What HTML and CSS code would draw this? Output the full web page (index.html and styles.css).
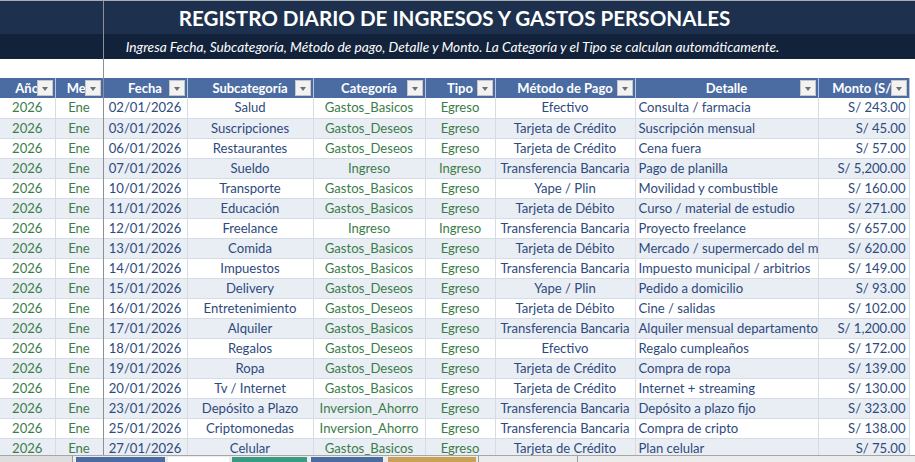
FILE: index.html
```html
<!DOCTYPE html>
<html lang="es">
<head>
<meta charset="utf-8">
<title>Registro diario</title>
<link rel="stylesheet" href="styles.css">
</head>
<body>
<div class="sheet">
  <div class="title-band"><h1>REGISTRO DIARIO DE INGRESOS Y GASTOS PERSONALES</h1></div>
  <div class="sub-band"><p>Ingresa Fecha, Subcategoría, Método de pago, Detalle y Monto. La Categoría y el Tipo se calculan automáticamente.</p></div>
  <div class="spacer"></div>
  <table class="grid">
    <colgroup>
      <col class="c-anio"><col class="c-mes"><col class="c-fecha"><col class="c-sub"><col class="c-cat"><col class="c-tipo"><col class="c-met"><col class="c-det"><col class="c-monto"><col class="c-rest">
    </colgroup>
    <thead>
      <tr>
        <th>Año<span class="dd"></span></th>
        <th>Mes<span class="dd"></span></th>
        <th>Fecha<span class="dd"></span></th>
        <th>Subcategoría<span class="dd"></span></th>
        <th>Categoría<span class="dd"></span></th>
        <th>Tipo<span class="dd"></span></th>
        <th>Método de Pago<span class="dd"></span></th>
        <th>Detalle<span class="dd"></span></th>
        <th>Monto (S/)<span class="dd"></span></th>
        <th class="rest"></th>
      </tr>
    </thead>
    <tbody>
      <tr><td class="g">2026</td><td class="g">Ene</td><td>02/01/2026</td><td>Salud</td><td class="g">Gastos_Basicos</td><td class="g">Egreso</td><td>Efectivo</td><td class="l">Consulta / farmacia</td><td class="r">S/ 243.00</td><td class="rest"></td></tr>
      <tr><td class="g">2026</td><td class="g">Ene</td><td>03/01/2026</td><td>Suscripciones</td><td class="g">Gastos_Deseos</td><td class="g">Egreso</td><td>Tarjeta de Crédito</td><td class="l">Suscripción mensual</td><td class="r">S/ 45.00</td><td class="rest"></td></tr>
      <tr><td class="g">2026</td><td class="g">Ene</td><td>06/01/2026</td><td>Restaurantes</td><td class="g">Gastos_Deseos</td><td class="g">Egreso</td><td>Tarjeta de Crédito</td><td class="l">Cena fuera</td><td class="r">S/ 57.00</td><td class="rest"></td></tr>
      <tr><td class="g">2026</td><td class="g">Ene</td><td>07/01/2026</td><td>Sueldo</td><td class="g">Ingreso</td><td class="g">Ingreso</td><td>Transferencia Bancaria</td><td class="l">Pago de planilla</td><td class="r">S/ 5,200.00</td><td class="rest"></td></tr>
      <tr><td class="g">2026</td><td class="g">Ene</td><td>10/01/2026</td><td>Transporte</td><td class="g">Gastos_Basicos</td><td class="g">Egreso</td><td>Yape / Plin</td><td class="l">Movilidad y combustible</td><td class="r">S/ 160.00</td><td class="rest"></td></tr>
      <tr><td class="g">2026</td><td class="g">Ene</td><td>11/01/2026</td><td>Educación</td><td class="g">Gastos_Basicos</td><td class="g">Egreso</td><td>Tarjeta de Débito</td><td class="l">Curso / material de estudio</td><td class="r">S/ 271.00</td><td class="rest"></td></tr>
      <tr><td class="g">2026</td><td class="g">Ene</td><td>12/01/2026</td><td>Freelance</td><td class="g">Ingreso</td><td class="g">Ingreso</td><td>Transferencia Bancaria</td><td class="l">Proyecto freelance</td><td class="r">S/ 657.00</td><td class="rest"></td></tr>
      <tr><td class="g">2026</td><td class="g">Ene</td><td>13/01/2026</td><td>Comida</td><td class="g">Gastos_Basicos</td><td class="g">Egreso</td><td>Tarjeta de Débito</td><td class="l">Mercado / supermercado del mes</td><td class="r">S/ 620.00</td><td class="rest"></td></tr>
      <tr><td class="g">2026</td><td class="g">Ene</td><td>14/01/2026</td><td>Impuestos</td><td class="g">Gastos_Basicos</td><td class="g">Egreso</td><td>Transferencia Bancaria</td><td class="l">Impuesto municipal / arbitrios</td><td class="r">S/ 149.00</td><td class="rest"></td></tr>
      <tr><td class="g">2026</td><td class="g">Ene</td><td>15/01/2026</td><td>Delivery</td><td class="g">Gastos_Deseos</td><td class="g">Egreso</td><td>Yape / Plin</td><td class="l">Pedido a domicilio</td><td class="r">S/ 93.00</td><td class="rest"></td></tr>
      <tr><td class="g">2026</td><td class="g">Ene</td><td>16/01/2026</td><td>Entretenimiento</td><td class="g">Gastos_Deseos</td><td class="g">Egreso</td><td>Tarjeta de Débito</td><td class="l">Cine / salidas</td><td class="r">S/ 102.00</td><td class="rest"></td></tr>
      <tr><td class="g">2026</td><td class="g">Ene</td><td>17/01/2026</td><td>Alquiler</td><td class="g">Gastos_Basicos</td><td class="g">Egreso</td><td>Transferencia Bancaria</td><td class="l">Alquiler mensual departamento</td><td class="r">S/ 1,200.00</td><td class="rest"></td></tr>
      <tr><td class="g">2026</td><td class="g">Ene</td><td>18/01/2026</td><td>Regalos</td><td class="g">Gastos_Deseos</td><td class="g">Egreso</td><td>Efectivo</td><td class="l">Regalo cumpleaños</td><td class="r">S/ 172.00</td><td class="rest"></td></tr>
      <tr><td class="g">2026</td><td class="g">Ene</td><td>19/01/2026</td><td>Ropa</td><td class="g">Gastos_Deseos</td><td class="g">Egreso</td><td>Tarjeta de Crédito</td><td class="l">Compra de ropa</td><td class="r">S/ 139.00</td><td class="rest"></td></tr>
      <tr><td class="g">2026</td><td class="g">Ene</td><td>20/01/2026</td><td>Tv / Internet</td><td class="g">Gastos_Basicos</td><td class="g">Egreso</td><td>Tarjeta de Crédito</td><td class="l">Internet + streaming</td><td class="r">S/ 130.00</td><td class="rest"></td></tr>
      <tr><td class="g">2026</td><td class="g">Ene</td><td>23/01/2026</td><td>Depósito a Plazo</td><td class="g">Inversion_Ahorro</td><td class="g">Egreso</td><td>Transferencia Bancaria</td><td class="l">Depósito a plazo fijo</td><td class="r">S/ 323.00</td><td class="rest"></td></tr>
      <tr><td class="g">2026</td><td class="g">Ene</td><td>25/01/2026</td><td>Criptomonedas</td><td class="g">Inversion_Ahorro</td><td class="g">Egreso</td><td>Transferencia Bancaria</td><td class="l">Compra de cripto</td><td class="r">S/ 138.00</td><td class="rest"></td></tr>
      <tr><td class="g">2026</td><td class="g">Ene</td><td>27/01/2026</td><td>Celular</td><td class="g">Gastos_Basicos</td><td class="g">Egreso</td><td>Tarjeta de Crédito</td><td class="l">Plan celular</td><td class="r">S/ 75.00</td><td class="rest"></td></tr>
    </tbody>
  </table>
  <div class="freeze"></div>
  <div class="bottom-strip">
    <span class="blk b-grey"></span>
    <span class="blk b-navy1"></span>
    <span class="blk b-white"></span>
    <span class="blk b-teal"></span>
    <span class="blk b-navy2"></span>
    <span class="blk b-gold"></span>
    <span class="blk b-grey2"></span>
  </div>
</div>
</body>
</html>
```

FILE: styles.css
```css
* { box-sizing: border-box; }
html, body { margin: 0; padding: 0; background: #ffffff; }
body { width: 915px; height: 462px; overflow: hidden; font-family: Lato, "Open Sans", sans-serif; }

.sheet { position: relative; width: 915px; height: 462px; overflow: hidden; }

.title-band {
  height: 34px;
  background: #1d314e;
  border-top: 1px solid #a9adb3;
  display: flex;
  align-items: center;
  justify-content: center;
  padding-right: 6px;
}
.title-band h1 {
  margin: 0;
  color: #ffffff;
  font-family: Lato, sans-serif;
  font-weight: 700;
  font-size: 20.6px;
  letter-spacing: 0;
  white-space: nowrap;
}

.sub-band {
  height: 25px;
  background: #12223a;
  display: flex;
  align-items: center;
  justify-content: center;
  padding-right: 10px;
}
.sub-band p {
  margin: 0;
  color: #ffffff;
  font-style: italic;
  font-size: 13.7px;
  white-space: nowrap;
}

.spacer { height: 19px; }

.grid {
  border-collapse: collapse;
  table-layout: fixed;
  width: 915px;
  font-size: 13.1px;
}
.c-anio { width: 55px; }
.c-mes { width: 48px; }
.c-fecha { width: 84px; }
.c-sub { width: 126px; }
.c-cat { width: 112px; }
.c-tipo { width: 70px; }
.c-met { width: 140px; }
.c-det { width: 183px; }
.c-monto { width: 91px; }
.c-rest { width: 6px; }

.grid th {
  position: relative;
  height: 20px;
  padding: 0 2px;
  background: #4a6ca3;
  color: #ffffff;
  font-weight: 700;
  font-size: 13px;
  text-align: center;
  white-space: nowrap;
  overflow: hidden;
  border-right: 1px solid #b6c4db;
  line-height: 19px;
}
.grid th.rest { background: #ffffff; border: none; }

.dd {
  position: absolute;
  right: 2px;
  top: 2px;
  width: 16px;
  height: 16px;
  background: #f2f2f2;
  border: 1px solid #c6c6c6;
}
.dd::after {
  content: "";
  position: absolute;
  left: 4px;
  top: 6px;
  border-left: 3.5px solid transparent;
  border-right: 3.5px solid transparent;
  border-top: 4px solid #6f6f6f;
}

.grid td {
  height: 20px;
  padding: 0 3px;
  text-align: center;
  color: #2e4a7d;
  white-space: nowrap;
  overflow: hidden;
  border-right: 1px solid #d6dce6;
  border-bottom: 1px solid #d6dce6;
  line-height: 19px;
}
.grid tbody tr:nth-child(even) td { background: #e9edf4; }
.grid td.g { color: #3b7d49; }
.grid td.l { text-align: left; }
.grid td.r { text-align: right; }
.grid td.rest, .grid tbody tr:nth-child(even) td.rest { background: #ffffff; border: none; }

.freeze {
  position: absolute;
  left: 103px;
  top: 1px;
  width: 1px;
  height: 461px;
  background: #8d9096;
}

.bottom-strip {
  position: absolute;
  left: 0;
  bottom: 0;
  width: 915px;
  height: 7px;
  background: #ececec;
  border-top: 1px solid #a6a6a6;
  display: flex;
  align-items: flex-end;
}
.blk { display: block; height: 5px; }
.b-grey { width: 73px; height: 6px; background: #dedede; border-right: 1px solid #9a9a9a; margin-right: 3px; }
.b-navy1 { width: 89px; background: #4a6ca3; margin-right: 3px; }
.b-white { width: 61px; background: #ffffff; margin-right: 3px; }
.b-teal { width: 75px; background: #3a9a83; margin-right: 4px; }
.b-navy2 { width: 72px; background: #4a6ca3; margin-right: 5px; }
.b-gold { width: 90px; background: #c9a258; border-right: 2px solid #ececec; }
.b-grey2 { width: 100px; height: 6px; border-left: 1px solid #9a9a9a; border-right: 1px solid #9a9a9a; }
```
